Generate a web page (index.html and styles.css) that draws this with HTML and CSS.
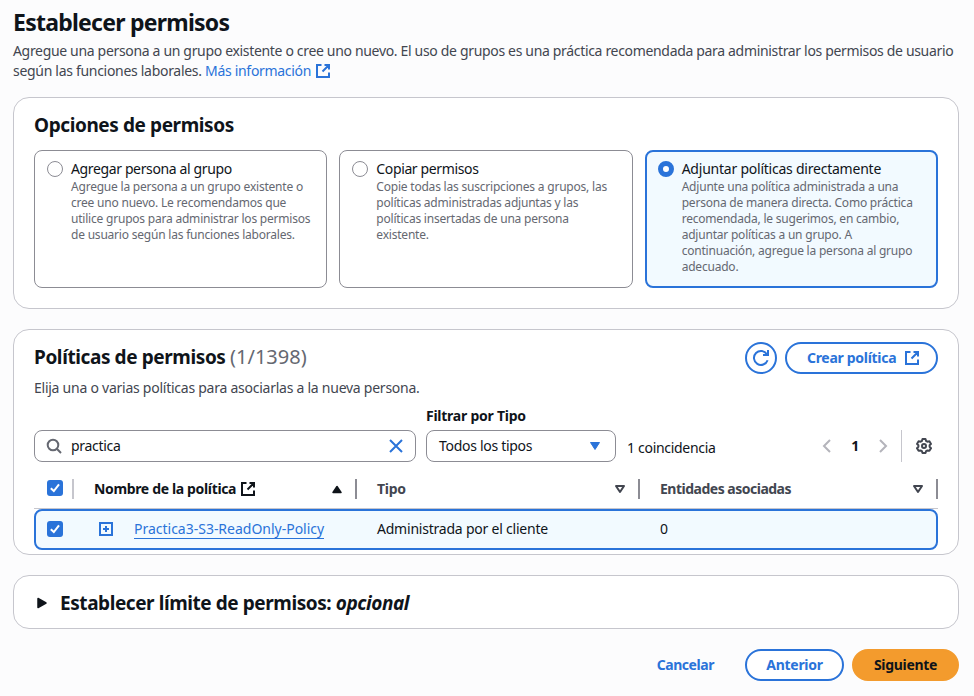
FILE: index.html
```html
<!DOCTYPE html>
<html lang="es">
<head>
<meta charset="utf-8">
<title>Establecer permisos</title>
<link rel="stylesheet" href="styles.css">
</head>
<body>
<svg class="defs" width="0" height="0" aria-hidden="true">
  <symbol id="external" viewBox="0 0 16 16"><path d="M14 9.500V14H2V2h4.500M9.500 2H14v4.500M7.500 8.500L14 2" fill="none" stroke="currentColor" stroke-width="2"/></symbol>
  <symbol id="check" viewBox="0 0 16 16"><path d="M3.800 8.300l3 2.700L12 4.300" fill="none" stroke="#fff" stroke-width="2"/></symbol>
  <symbol id="sort" viewBox="0 0 16 16"><path d="M4 5h8l-4 6z" fill="none" stroke="currentColor" stroke-width="2" stroke-linejoin="round"/></symbol>
</svg>
<main class="page">
  <header class="page-header">
    <h1>Establecer permisos</h1>
    <p><span class="intro">Agregue una persona a un grupo existente o cree uno nuevo. El uso de grupos es una práctica recomendada para administrar los permisos de usuario</span><br>según las funciones laborales. <a href="#">Más información</a><svg class="icon info-icon"><use href="#external"/></svg></p>
  </header>

  <section class="card options">
    <h2>Opciones de permisos</h2>
    <div class="tiles">
      <label class="tile">
        <span class="radio"></span>
        <span class="tile-text"><span class="tile-title">Agregar persona al grupo</span>
        <span class="tile-desc">Agregue la persona a un grupo existente o<br>cree uno nuevo. Le recomendamos que<br>utilice grupos para administrar los permisos<br>de usuario según las funciones laborales.</span></span>
      </label>
      <label class="tile">
        <span class="radio"></span>
        <span class="tile-text"><span class="tile-title">Copiar permisos</span>
        <span class="tile-desc">Copie todas las suscripciones a grupos, las<br>políticas administradas adjuntas y las<br>políticas insertadas de una persona<br>existente.</span></span>
      </label>
      <label class="tile selected">
        <span class="radio"></span>
        <span class="tile-text"><span class="tile-title">Adjuntar políticas directamente</span>
        <span class="tile-desc">Adjunte una política administrada a una<br>persona de manera directa. Como práctica<br>recomendada, le sugerimos, en cambio,<br>adjuntar políticas a un grupo. A<br>continuación, agregue la persona al grupo<br>adecuado.</span></span>
      </label>
    </div>
  </section>

  <section class="card policies">
    <div class="policies-head">
      <h2>Políticas de permisos <span class="count">(1/1398)</span></h2>
      <button class="btn round" aria-label="Actualizar"><svg class="icon refresh" viewBox="0 0 18 18"><path d="M15.600 11.200A7 7 0 1 1 14.900 5.200M16 1v5h-5" fill="none" stroke="currentColor" stroke-width="2"/></svg></button>
      <button class="btn create"><span>Crear política</span><svg class="icon"><use href="#external"/></svg></button>
    </div>
    <p class="policies-desc">Elija una o varias políticas para asociarlas a la nueva persona.</p>
    <div class="filters">
      <div class="field search">
        <svg class="icon" viewBox="0 0 16 16"><g fill="none" stroke="#656871" stroke-width="2"><circle cx="7" cy="7" r="5.300"/><path d="M10.800 10.800l4.200 4.200"/></g></svg>
        <span class="query">practica</span>
        <svg class="icon" viewBox="0 0 16 16"><path d="M2 2l12 12M14 2L2 14" stroke="#2a73d9" stroke-width="2"/></svg>
      </div>
      <div class="type-filter">
        <span class="filter-label">Filtrar por Tipo</span>
        <div class="field select"><span>Todos los tipos</span><svg class="icon" viewBox="0 0 16 16"><path d="M3.500 4.500h9l-4.500 7z" fill="#2a73d9" stroke="#2a73d9" stroke-linejoin="round"/></svg></div>
      </div>
      <span class="matches">1 coincidencia</span>
      <nav class="pager">
        <svg class="icon" viewBox="0 0 16 16"><path d="M11 2L5 8l6 6" fill="none" stroke="#b4b4bb" stroke-width="2"/></svg>
        <b>1</b>
        <svg class="icon" viewBox="0 0 16 16"><path d="M5 2l6 6-6 6" fill="none" stroke="#b4b4bb" stroke-width="2"/></svg>
      </nav>
      <div class="settings"><svg class="icon" viewBox="0 0 16 16"><g fill="none" stroke="#424650" stroke-width="2" stroke-linejoin="round"><path d="M6.500 1h3l.6 2 1.300.7 2-.5 1.600 2.700L13.600 7.300v1.400L15 10.200l-1.600 2.600-2-.4-1.300.7-.6 1.900h-3l-.6-1.900-1.300-.7-2 .4L1 10.200l1.400-1.500V7.300L1 5.900l1.600-2.700 2 .5L5.900 3z"/><circle cx="8" cy="8" r="2"/></g></svg></div>
    </div>
    <div class="table">
      <div class="row head">
        <div class="cell pick"><span class="checkbox"><svg><use href="#check"/></svg></span></div>
        <div class="cell name"><span class="name-label">Nombre de la política</span><svg class="icon"><use href="#external"/></svg><svg class="icon sort" viewBox="0 0 16 16"><path d="M4 11.500h8l-4-6z" fill="currentColor" stroke="currentColor" stroke-width="1.500" stroke-linejoin="round"/></svg></div>
        <div class="cell muted"><span>Tipo</span><svg class="icon sort"><use href="#sort"/></svg></div>
        <div class="cell muted"><span class="entities-label">Entidades asociadas</span><svg class="icon sort"><use href="#sort"/></svg></div>
      </div>
      <div class="row data">
        <div class="cell pick"><span class="checkbox"><svg><use href="#check"/></svg></span></div>
        <div class="cell policy"><svg class="icon" viewBox="0 0 16 16"><path d="M2 2h12v12H2zM5 8h6M8 5v6" fill="none" stroke="#2a73d9" stroke-width="2"/></svg><a class="policy-link" href="#">Practica3-S3-ReadOnly-Policy</a></div>
        <div class="cell kind">Administrada por el cliente</div>
        <div class="cell">0</div>
      </div>
    </div>
  </section>

  <section class="card boundary">
    <svg class="icon" viewBox="0 0 16 16"><path d="M4 3.500v9l8-4.500z" fill="#0f141a" stroke="#0f141a" stroke-width="1.500" stroke-linejoin="round"/></svg>
    <h2>Establecer límite de permisos: <i>opcional</i></h2>
  </section>

  <footer class="actions">
    <button class="btn plain">Cancelar</button>
    <button class="btn previous">Anterior</button>
    <button class="btn primary">Siguiente</button>
  </footer>
</main>
</body>
</html>
```
FILE: styles.css
```css
* { box-sizing: border-box; }
body { margin: 0; background: #fcfcfd; color: #0f141a; font: 14px/20px "Noto Sans", "Open Sans", sans-serif; letter-spacing: -0.3px; white-space: nowrap; }
.defs { position: absolute; }
.page { width: 974px; height: 696px; padding: 8px 15px 0 13px; overflow: hidden; }
h1, h2, p { margin: 0; }
h1 { font-size: 23px; line-height: 28px; letter-spacing: -0.75px; }
h2 { font-size: 19px; line-height: 24px; letter-spacing: -0.4px; }
.page-header { height: 89px; }
.page-header p { margin-top: 5px; color: #424650; }
.intro { letter-spacing: -0.329px; }
a { color: #2a73d9; text-decoration: none; }
.icon { width: 16px; height: 16px; flex: none; display: block; }
.info-icon { display: inline-block; vertical-align: -3px; margin-left: 4px; color: #2a73d9; }
.card { background: #fff; border: 1px solid #c6c6cd; border-radius: 16px; padding: 0 20px; margin-bottom: 20px; }
.options { height: 212px; padding-top: 15px; }
.tiles { display: grid; grid-template-columns: repeat(3, 1fr); gap: 12px; margin-top: 13px; }
.tile { height: 138px; border: 1px solid #8c8c94; border-radius: 8px; padding: 8px 11px; display: flex; gap: 8px; }
.tile.selected { border: 2px solid #2a73d9; background: #f2faff; padding: 7px 10px; }
.radio { width: 16px; height: 16px; margin: 2px 0 0 1px; border: 1px solid #8c8c94; border-radius: 50%; background: #fff; flex: none; }
.selected .radio { border: 5px solid #2a73d9; }
.tile-title, .tile-desc { display: block; }
.tile-title { letter-spacing: -0.37px; }
.selected .tile-title { letter-spacing: -0.23px; }
.tile-desc { font-size: 12px; line-height: 16px; color: #656871; letter-spacing: -0.21px; }
.policies { height: 226px; padding-top: 12px; }
.policies-head { display: flex; align-items: center; height: 32px; }
.policies-head h2 { margin-right: auto; margin-top: -2px; }
.count { font-size: 20px; font-weight: 400; color: #656871; letter-spacing: 0; }
.btn { height: 32px; border: 2px solid #2a73d9; border-radius: 16px; background: #fff; color: #2a73d9; font: 700 14px/20px "Noto Sans", "Open Sans", sans-serif; letter-spacing: -0.3px; padding: 0 20px; display: flex; align-items: center; justify-content: center; white-space: nowrap; }
.round { width: 32px; padding: 0; margin-right: 8px; }
.refresh { width: 18px; height: 18px; }
.create { width: 153px; justify-content: space-between; padding: 0 16px 0 20px; }
.policies-desc { color: #424650; margin-top: 4px; letter-spacing: -0.25px; }
.filters { display: flex; align-items: flex-end; height: 64px; }
.field { height: 32px; border: 1px solid #8c8c94; border-radius: 8px; display: flex; align-items: center; }
.search { width: 382px; padding: 0 11px; }
.query { flex: 1; margin-left: 9px; }
.type-filter { width: 190px; margin-left: 10px; }
.filter-label { display: block; font-weight: 700; margin-bottom: 4px; letter-spacing: -0.25px; }
.select { justify-content: space-between; padding: 0 12px; }
.matches { margin: 0 0 4px 11px; }
.pager { display: flex; align-items: center; justify-content: space-between; width: 72px; height: 32px; margin-left: auto; }
.settings { width: 37px; height: 32px; border-left: 1px solid #c6c6cd; margin-left: 10px; display: flex; align-items: center; padding-left: 14px; }
.table { margin-top: 6px; }
.row { display: grid; grid-template-columns: 40px 283px 283px 298px; }
.head { height: 41px; border-bottom: 1px solid #c6c6cd; font-weight: 700; }
.head .cell { height: 20px; margin-top: 11px; border-right: 2px solid #8c8c94; padding-left: 20px; display: flex; align-items: center; }
.head .pick { border-color: #c6c6cd; padding-left: 13px; }
.head .sort { margin: 0 10px 0 auto; }
.head .checkbox { margin-bottom: 2px; }
.name-label { letter-spacing: -0.35px; }
.entities-label { letter-spacing: -0.5px; }
.name .icon:not(.sort) { margin-left: 4px; }
.muted { color: #424650; }
.checkbox { width: 16px; height: 16px; border-radius: 3px; background: #2a73d9; display: block; }
.checkbox svg { display: block; width: 16px; height: 16px; }
.data { height: 41px; border: 2px solid #2a73d9; border-radius: 8px; background: #f2faff; grid-template-columns: 38px 283px 283px 1fr; align-items: center; padding-bottom: 1px; }
.data .cell { padding-left: 20px; }
.data .pick { padding-left: 11px; }
.kind { letter-spacing: -0.22px; }
.policy { display: flex; align-items: center; }
.data .policy { padding-left: 24px; }
.policy-link { margin-left: 20px; line-height: 18px; border-bottom: 1px solid #2a73d9; letter-spacing: -0.01px; }
.boundary { height: 54px; display: flex; align-items: center; gap: 10px; padding-top: 1px; }
.boundary h2 { letter-spacing: -0.43px; }
.actions { display: flex; justify-content: flex-end; gap: 8px; }
.plain { border-color: transparent; background: none; margin-right: 1px; letter-spacing: -0.45px; }
.previous { width: 99px; }
.primary { width: 107px; background: #f39b2d; border-color: #f39b2d; color: #0f141a; }
```
